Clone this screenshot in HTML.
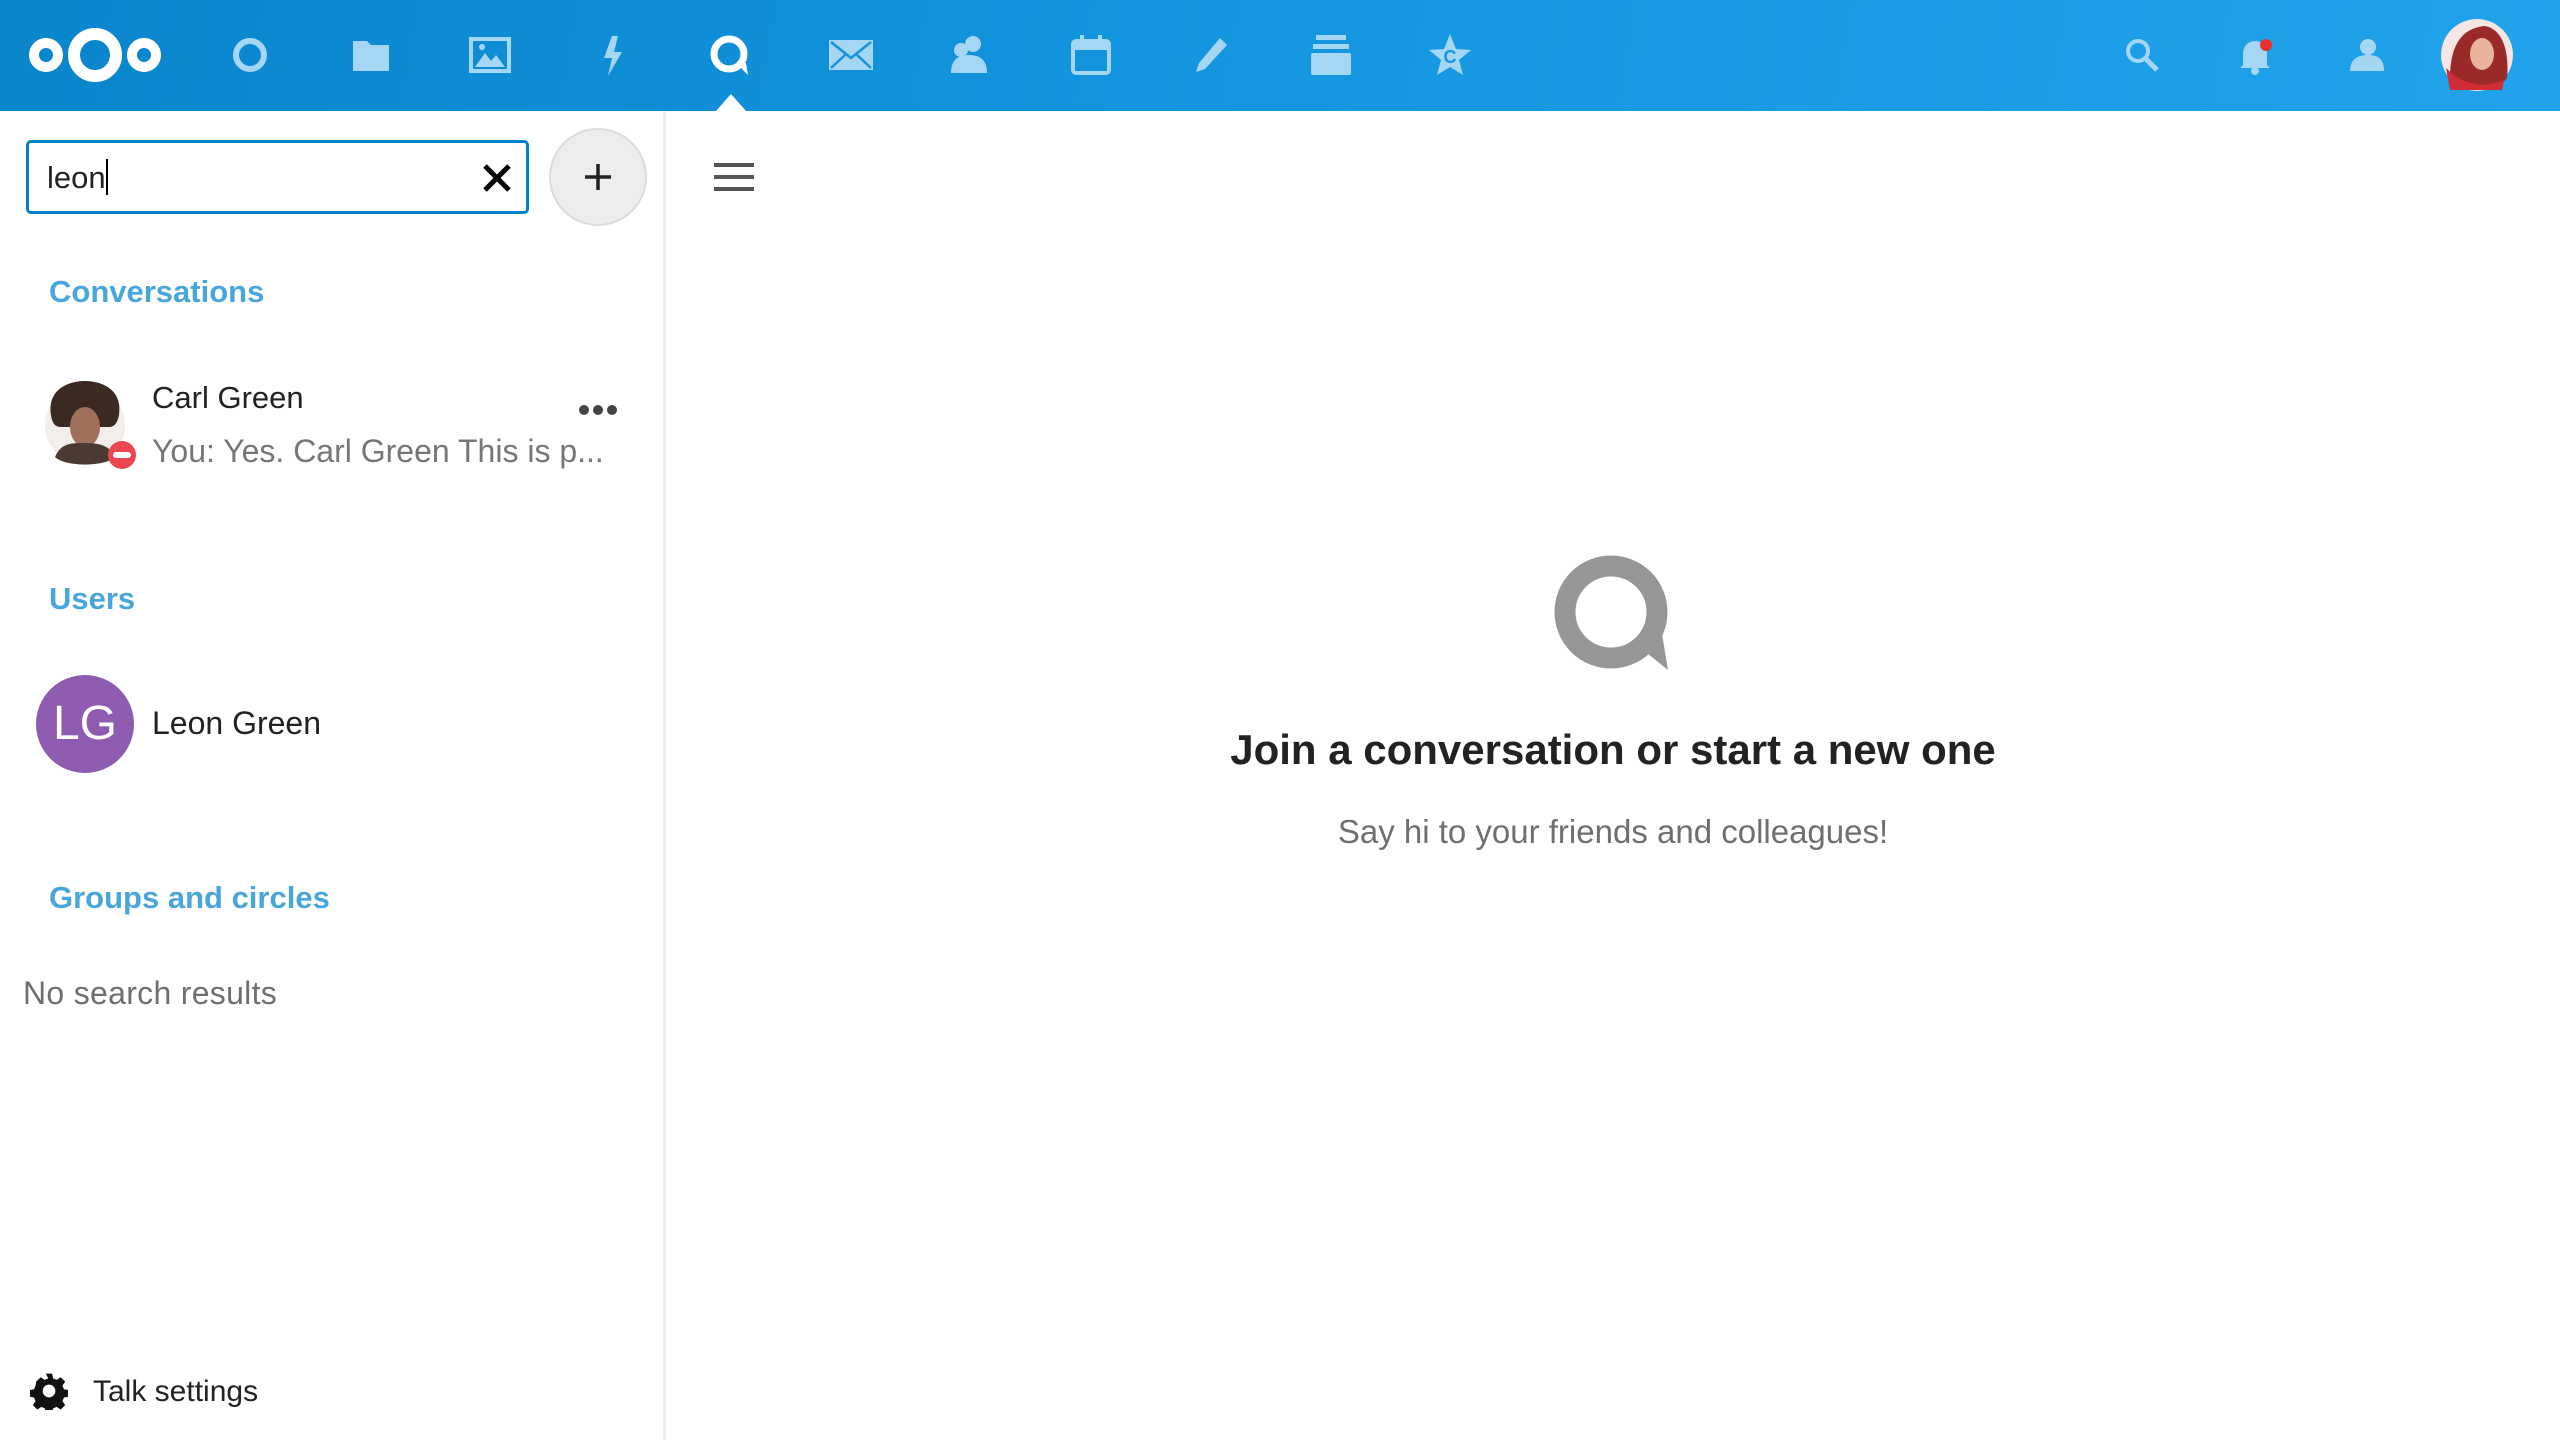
<!DOCTYPE html>
<html><head><meta charset="utf-8"><style>
*{margin:0;padding:0;box-sizing:border-box}
body{width:2560px;height:1440px;overflow:hidden;background:#fff;font-family:"Liberation Sans",sans-serif;position:relative}
.hdr{position:absolute;left:0;top:0;width:2560px;height:111px;background:linear-gradient(100deg,#0a85cc 0%,#1496e0 50%,#21a3ec 100%)}
.ic{position:absolute;top:55px;transform:translate(-50%,-50%)}
.side{position:absolute;left:0;top:111px;width:666px;height:1329px;border-right:3px solid #ededed}
.abs{position:absolute}
.h{color:#49a6dc;font-weight:bold;font-size:31px}
</style></head><body>
<div class="hdr">
<svg class="ic" style="left:95px" width="136" height="64" viewBox="0 0 136 64"><circle cx="68" cy="32" r="21" fill="none" stroke="#fff" stroke-width="12"/><circle cx="19" cy="32" r="12" fill="none" stroke="#fff" stroke-width="10"/><circle cx="117" cy="32" r="12" fill="none" stroke="#fff" stroke-width="10"/></svg>
<svg class="ic" style="left:250px" width="40" height="40"><circle cx="20" cy="20" r="14" fill="none" stroke="#a5d6f3" stroke-width="6"/></svg>
<svg class="ic" style="left:371px" width="40" height="40"><path d="M2 6h14l4 4h18v26H2z" fill="#a5d6f3"/></svg>
<svg class="ic" style="left:490px" width="42" height="40"><rect x="2" y="4" width="38" height="32" fill="none" stroke="#a5d6f3" stroke-width="4"/><path d="M6 32l10-14 6 8 5-6 9 12z" fill="#a5d6f3"/><circle cx="13" cy="12" r="3" fill="#a5d6f3"/></svg>
<svg class="ic" style="left:611px" width="30" height="42"><path d="M16 2L8 24h8l-4 18 14-24h-8l4-16z" fill="#a5d6f3"/></svg>
<svg class="ic" style="left:730px" width="44" height="44"><circle cx="21" cy="21" r="15" fill="none" stroke="#fff" stroke-width="7"/><path d="M30 32l10 10-2-12z" fill="#fff"/></svg>
<svg class="ic" style="left:851px" width="46" height="34"><rect x="1" y="2" width="44" height="30" fill="#a5d6f3"/><path d="M3 4l20 16 20-16M3 30l14-13M43 30L29 17" stroke="#1493dc" stroke-width="2.5" fill="none"/></svg>
<svg class="ic" style="left:970px" width="46" height="44"><circle cx="26" cy="11" r="8" fill="#a5d6f3"/><circle cx="14" cy="17" r="7" fill="#a5d6f3"/><path d="M4 40c0-14 8-18 18-18s18 4 18 18z" fill="#a5d6f3"/></svg>
<svg class="ic" style="left:1091px" width="42" height="42"><rect x="3" y="7" width="36" height="32" rx="3" fill="none" stroke="#a5d6f3" stroke-width="4"/><rect x="3" y="7" width="36" height="9" fill="#a5d6f3"/><rect x="10" y="1" width="4" height="10" fill="#a5d6f3"/><rect x="28" y="1" width="4" height="10" fill="#a5d6f3"/></svg>
<svg class="ic" style="left:1210px" width="40" height="40"><path d="M30 3l7 7-22 24-9 3 3-9z" fill="#a5d6f3"/></svg>
<svg class="ic" style="left:1331px" width="42" height="44"><rect x="6" y="2" width="30" height="5" fill="#a5d6f3"/><rect x="3" y="11" width="36" height="5" fill="#a5d6f3"/><rect x="1" y="20" width="40" height="22" rx="2" fill="#a5d6f3"/></svg>
<svg class="ic" style="left:1450px" width="46" height="46"><path d="M23 2l6 15 15 1-12 10 4 15-13-8-13 8 4-15L2 18l15-1z" fill="#a5d6f3"/><text x="23" y="31" font-size="18" font-weight="bold" text-anchor="middle" fill="#1496e0" font-family="Liberation Sans">C</text></svg>
<div class="abs" style="left:716px;top:94px;width:0;height:0;border-left:15px solid transparent;border-right:15px solid transparent;border-bottom:17px solid #fff"></div>
<svg class="ic" style="left:2142px" width="40" height="40"><circle cx="16" cy="16" r="10" fill="none" stroke="#a5d6f3" stroke-width="4"/><path d="M23 23l12 12" stroke="#a5d6f3" stroke-width="5"/></svg>
<svg class="ic" style="left:2255px" width="40" height="40"><path d="M8 30V18a12 12 0 0124 0v12l3 3H5z" fill="#a5d6f3"/><circle cx="20" cy="36" r="4" fill="#a5d6f3"/><circle cx="31" cy="10" r="6" fill="#e9322d"/></svg>
<svg class="ic" style="left:2366px" width="40" height="40"><circle cx="22" cy="12" r="8" fill="#a5d6f3"/><path d="M4 36c0-12 8-16 18-16s16 4 16 16z" fill="#a5d6f3"/></svg>
<svg class="ic" style="left:2477px" width="74" height="74"><circle cx="37" cy="37" r="36" fill="#f3e6e3"/><path d="M10 60c0-30 10-50 35-52 20 4 24 30 22 52-10 14-40 14-57 0z" fill="#9a2a2a"/><ellipse cx="42" cy="36" rx="12" ry="16" fill="#e7b49b"/><path d="M6 50c10 10 30 24 58 12l-2 10H10z" fill="#d02b36"/></svg>
</div>
<div class="side">
<div class="abs" style="left:26px;top:29px;width:503px;height:74px;border:3px solid #0082c9;border-radius:5px;font-size:31px;color:#222;padding:16px 0 0 18px">leon<span style="display:inline-block;width:2px;height:36px;background:#000;vertical-align:-7px"></span></div>
<svg class="abs" style="left:482px;top:52px" width="30" height="30"><path d="M3 3l24 24M27 3L3 27" stroke="#000" stroke-width="5"/></svg>
<div class="abs" style="left:549px;top:17px;width:98px;height:98px;border-radius:50%;background:#ededed;border:2px solid #dcdcdc"></div>
<svg class="abs" style="left:583px;top:51px" width="30" height="30"><path d="M15 2v26M2 15h26" stroke="#222" stroke-width="3.5"/></svg>
<div class="abs h" style="left:49px;top:163px">Conversations</div>
<svg class="abs" style="left:37px;top:264px" width="100" height="100"><circle cx="48" cy="50" r="40" fill="#f2eeea"/><path d="M14 40c-4-26 18-34 34-34s38 8 34 34c-2 10-6 12-10 12H24c-6 0-9-4-10-12z" fill="#3b2a22"/><ellipse cx="48" cy="52" rx="15" ry="20" fill="#a0705a"/><path d="M18 82c6-14 16-14 30-14s24 2 30 14c-10 10-50 10-60 0z" fill="#4a3a33"/><circle cx="85" cy="80" r="14" fill="#ea4751"/><rect x="76" y="77" width="18" height="6" rx="3" fill="#fff"/></svg>
<div class="abs" style="left:152px;top:269px;font-size:31px;color:#222">Carl Green</div>
<div class="abs" style="left:152px;top:322px;font-size:32px;color:#767676">You: Yes. Carl Green This is p...</div>
<svg class="abs" style="left:578px;top:292px" width="40" height="14"><circle cx="6" cy="7" r="5" fill="#444"/><circle cx="20" cy="7" r="5" fill="#444"/><circle cx="34" cy="7" r="5" fill="#444"/></svg>
<div class="abs h" style="left:49px;top:470px">Users</div>
<div class="abs" style="left:36px;top:564px;width:98px;height:98px;border-radius:50%;background:#8e5bb1;color:#fff;font-size:48px;text-align:center;line-height:98px">LG</div>
<div class="abs" style="left:152px;top:594px;font-size:32px;color:#222">Leon Green</div>
<div class="abs h" style="left:49px;top:769px">Groups and circles</div>
<div class="abs" style="left:23px;top:864px;font-size:32px;color:#6f6f6f;letter-spacing:0.3px">No search results</div>
<svg class="abs" style="left:30px;top:1261px" width="38" height="38" viewBox="0 0 24 24"><path d="M10 1h4l.6 3 2.2 1 2.6-1.7 2.8 2.8-1.7 2.6 1 2.2 3 .6v4l-3 .6-1 2.2 1.7 2.6-2.8 2.8-2.6-1.7-2.2 1-.6 3h-4l-.6-3-2.2-1-2.6 1.7-2.8-2.8 1.7-2.6-1-2.2-3-.6v-4l3-.6 1-2.2L3.9 6.1l2.8-2.8 2.6 1.7 2.2-1z" fill="#111"/><circle cx="12" cy="12" r="4" fill="#fff"/></svg>
<div class="abs" style="left:93px;top:1264px;font-size:30px;color:#222">Talk settings</div>
</div>
<svg class="abs" style="left:714px;top:162px" width="40" height="30"><path d="M0 3h40M0 15h40M0 27h40" stroke="#555" stroke-width="4"/></svg>
<svg class="abs" style="left:1550px;top:551px" width="126" height="126" viewBox="0 0 126 126"><circle cx="61" cy="61" r="46" fill="none" stroke="#969696" stroke-width="21"/><path d="M88 95l30 24-6-36z" fill="#969696"/></svg>
<div class="abs" style="left:1000px;width:1226px;top:726px;text-align:center;font-size:42px;font-weight:bold;color:#222">Join a conversation or start a new one</div>
<div class="abs" style="left:1000px;width:1226px;top:813px;text-align:center;font-size:33px;color:#6f6f6f">Say hi to your friends and colleagues!</div>
</body></html>
